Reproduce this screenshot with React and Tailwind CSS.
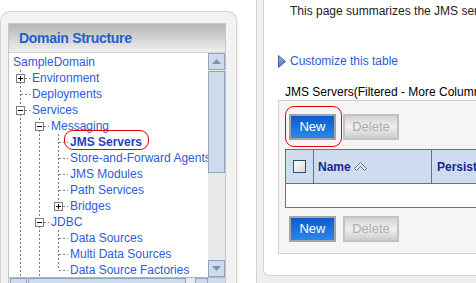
import React from "react";

const DASH = "#7a7a7a";

function Cell({ type, box }) {
  return (
    <svg width="19" height="16" className="block shrink-0">
      {(type === "v" || type === "tee") && (
        <line x1="9.5" y1="0" x2="9.5" y2="16" stroke={DASH} strokeDasharray="2 2" />
      )}
      {type === "corner" && (
        <line x1="9.5" y1="0" x2="9.5" y2="8" stroke={DASH} strokeDasharray="2 2" />
      )}
      {(type === "tee" || type === "corner") && (
        <line x1="10" y1="8.5" x2="19" y2="8.5" stroke={DASH} strokeDasharray="2 2" />
      )}
      {box && (
        <g>
          <rect x="5.5" y="4.5" width="8" height="8" fill="#ffffff" stroke="#7c7c7c" />
          <line x1="7" y1="8.5" x2="12" y2="8.5" stroke="#000" />
          {box === "+" && <line x1="9.5" y1="6" x2="9.5" y2="11" stroke="#000" />}
        </g>
      )}
    </svg>
  );
}

function Row({ cells = [], children, bold, highlight }) {
  return (
    <div className="flex h-4 items-center whitespace-nowrap">
      {cells.map((c, i) => (
        <Cell key={i} type={c[0]} box={c[1]} />
      ))}
      <span
        className={
          "relative ml-[2px] leading-4 " +
          (bold ? "font-bold text-[#1f3fc4]" : "text-[#2f5bd9]")
        }
      >
        {children}
        {highlight && (
          <span className="absolute -left-[6px] -top-[4px] h-[20px] w-[85px] rounded-[9px] border border-[#e60000]" />
        )}
      </span>
    </div>
  );
}

function ScrollBtn({ dir }) {
  return (
    <div className="flex h-[17px] w-[17px] shrink-0 items-center justify-center border border-[#8ea4bf] bg-[#cddbed]">
      <svg width="9" height="5">
        {dir === "up" ? (
          <polygon points="0,5 4.5,0 9,5" fill="#7f93ad" />
        ) : (
          <polygon points="0,0 4.5,5 9,0" fill="#7f93ad" />
        )}
      </svg>
    </div>
  );
}

function NewBtn() {
  return (
    <div className="flex h-[26px] w-[47px] items-center justify-center border-2 border-[#a4a4a4] bg-gradient-to-b from-[#0c5bcc] to-[#2c88e8] text-[13px] text-white">
      New
    </div>
  );
}

function DeleteBtn() {
  return (
    <div className="flex h-[26px] w-[56px] items-center justify-center border-2 border-[#c2c2c2] bg-gradient-to-b from-[#d2d2d2] via-[#f0f0f0] to-[#cccccc] text-[13px] text-[#ababab]">
      Delete
    </div>
  );
}

export default function App() {
  return (
    <div className="flex h-[283px] w-[476px] overflow-hidden bg-white font-['Liberation_Sans',Arial,sans-serif] text-[12px]">
      {/* Left column */}
      <div className="flex w-[237px] shrink-0 flex-col pt-[11px]">
        <div className="flex flex-1 flex-col rounded-t-[10px] border border-b-0 border-[#d6d6d6] bg-[#f2f2f2] pl-[7px] pr-[10px] pt-[11px] shadow-[1px_0_2px_rgba(0,0,0,0.08)]">
          <div className="flex flex-1 flex-col border border-b-0 border-[#c6c6c6] bg-white">
            <div className="flex h-[29px] items-center border-b border-[#d4d4d4] bg-gradient-to-b from-[#b6b6b6] to-[#efefef] pl-[10px]">
              <span className="text-[14px] font-bold tracking-[-0.3px] text-[#1f5fd0]">
                Domain Structure
              </span>
            </div>
            <div className="flex h-[224px]">
              <div className="flex-1 overflow-hidden pl-[2px] pt-px">
                <div className="flex h-4 items-center pl-[2px] leading-4 text-[#2f5bd9]">SampleDomain</div>
                <Row cells={[["tee", "+"]]}>Environment</Row>
                <Row cells={[["tee"]]}>Deployments</Row>
                <Row cells={[["tee", "-"]]}>Services</Row>
                <Row cells={[["v"], ["tee", "-"]]}>Messaging</Row>
                <Row cells={[["v"], ["v"], ["tee"]]} bold highlight>
                  JMS Servers
                </Row>
                <Row cells={[["v"], ["v"], ["tee"]]}>Store-and-Forward Agents</Row>
                <Row cells={[["v"], ["v"], ["tee"]]}>JMS Modules</Row>
                <Row cells={[["v"], ["v"], ["tee"]]}>Path Services</Row>
                <Row cells={[["v"], ["v"], ["corner", "+"]]}>Bridges</Row>
                <Row cells={[["v"], ["tee", "-"]]}>JDBC</Row>
                <Row cells={[["v"], ["v"], ["tee"]]}>Data Sources</Row>
                <Row cells={[["v"], ["v"], ["tee"]]}>Multi Data Sources</Row>
                <Row cells={[["v"], ["v"], ["corner"]]}>Data Source Factories</Row>
              </div>
              <div className="flex w-[17px] shrink-0 flex-col bg-[#e9e9e9]">
                <ScrollBtn dir="up" />
                <div className="mt-px h-[102px] border border-[#8ea4bf] bg-[#cddbed]" />
                <div className="flex-1" />
                <ScrollBtn dir="down" />
              </div>
            </div>
            <div className="flex h-[17px] border-t border-[#a9b9cc] bg-[#e9e9e9] pl-px">
              <div className="h-[17px] w-[17px] border border-[#8ea4bf] bg-[#cddbed]" />
              <div className="ml-px h-[17px] w-[158px] border border-[#8ea4bf] bg-[#cddbed]" />
              <div className="flex-1" />
              <div className="h-[17px] w-[13px] border border-[#8ea4bf] bg-[#cddbed]" />
              <div className="h-[17px] w-[17px] bg-[#cddbed]" />
            </div>
          </div>
        </div>
      </div>

      {/* Right column */}
      <div className="ml-[19px] flex flex-1 flex-col border-l border-[#d4d4d4] bg-[#efefef] pb-[7px] pl-[6px]">
        <div className="flex flex-1 flex-col overflow-hidden rounded-bl-[6px] border-b border-l border-[#d4d4d4] bg-white">
          <div className="whitespace-nowrap pl-[26px] pt-[4px] leading-[14px] text-[#222]">
            This page summarizes the JMS servers that have been configured in the current WebLogic Server domain.
          </div>
          <div className="mt-[36px] flex h-[14px] items-center whitespace-nowrap pl-[14px]">
            <svg width="8" height="13" className="shrink-0">
              <defs>
                <linearGradient id="arr" x1="0" y1="0" x2="0" y2="1">
                  <stop offset="0" stopColor="#9cb8e6" />
                  <stop offset="1" stopColor="#3f6fc4" />
                </linearGradient>
              </defs>
              <polygon points="0.5,0.5 7.5,6.5 0.5,12.5" fill="url(#arr)" stroke="#4a6694" />
            </svg>
            <span className="ml-[4px] text-[#2f5bd9]">Customize this table</span>
          </div>
          <div className="mt-[17px] whitespace-nowrap pl-[21px] leading-[14px] text-black">
            JMS Servers(Filtered - More Columns Exist)
          </div>
          <div className="ml-[14px] mt-[1px] w-[300px] shrink-0 border border-[#d0d0d0] bg-[#f5f5f5] pb-[11px] pt-[13px]">
            <div className="flex gap-[7px] pl-[10px]">
              <div className="relative">
                <NewBtn />
                <div className="absolute -left-[4px] -top-[8px] h-[41px] w-[57px] rounded-[9px] border border-[#e60000]" />
              </div>
              <DeleteBtn />
            </div>
            <div className="ml-[6px] mt-[9px] border border-[#5b7595]">
              <div className="flex h-[34px] border-b border-[#5b7595] bg-[#cfdcef]">
                <div className="flex w-[28px] shrink-0 items-center justify-center border-r border-[#5b7595]">
                  <div className="h-[13px] w-[13px] border border-[#2f4d6e] bg-gradient-to-br from-[#ffffff] to-[#d8d8d8]" />
                </div>
                <div className="flex w-[118px] shrink-0 items-center border-r border-[#5b7595] pl-[4px] font-bold text-[#1b2596]">
                  Name
                  <svg width="13" height="10" className="ml-[3px]">
                    <polygon
                      points="0.5,6.5 6.5,0.5 12.5,6.5 10.5,8.5 6.5,4.5 2.5,8.5"
                      fill="#e4eaf3"
                      stroke="#5f7591"
                    />
                  </svg>
                </div>
                <div className="flex flex-1 items-center whitespace-nowrap pl-[5px] font-bold text-[#1b2596]">
                  Persistent Store
                </div>
              </div>
              <div className="h-[23px] bg-white" />
            </div>
            <div className="mt-[8px] flex gap-[7px] pl-[10px]">
              <NewBtn />
              <DeleteBtn />
            </div>
          </div>
        </div>
      </div>
    </div>
  );
}
